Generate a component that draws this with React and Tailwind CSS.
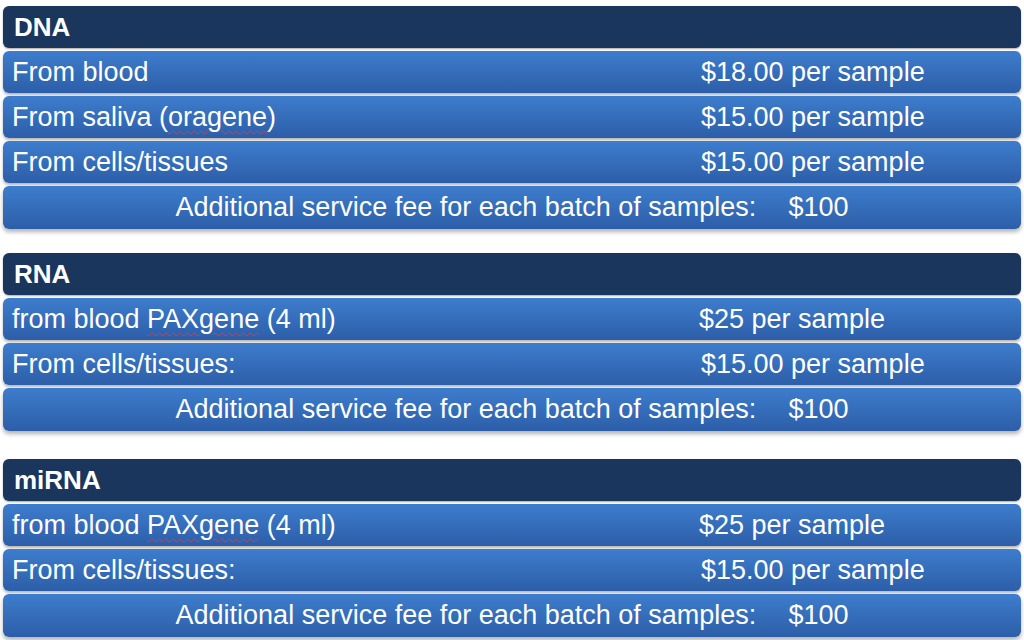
import React from "react";

const font = { fontFamily: '"Liberation Sans", Arial, sans-serif' };

function Header({ children }) {
  return (
    <div className="h-[42px] rounded-[6px] bg-[#1b365d] flex items-center pl-[11px] text-white font-bold text-[26px] shadow-[0_1px_2px_rgba(0,0,0,0.35)]">
      {children}
    </div>
  );
}

function Row({ label, price }) {
  return (
    <div className="h-[42px] rounded-[6px] bg-gradient-to-b from-[#3d7dcd] to-[#2d5ea8] flex items-center pl-[9px] text-white text-[27px] shadow-[0_2px_3px_rgba(0,0,0,0.3)]">
      <span className="w-[689px] shrink-0 whitespace-nowrap">{label}</span>
      <span className="whitespace-nowrap">{price}</span>
    </div>
  );
}

function FeeRow() {
  return (
    <div className="h-[43px] rounded-[6px] bg-gradient-to-b from-[#3d7dcd] to-[#2d5ea8] flex items-center justify-center gap-[32px] text-white text-[27px] shadow-[0_3px_4px_rgba(0,0,0,0.3)]">
      <span className="whitespace-nowrap">Additional service fee for each batch of samples:</span>
      <span className="whitespace-nowrap">$100</span>
    </div>
  );
}

const Sq = ({ children }) => (
  <span className="underline decoration-wavy decoration-[#e03a3a] decoration-1 underline-offset-[4px]">
    {children}
  </span>
);

export default function App() {
  return (
    <div className="w-[1024px] h-[640px] bg-white overflow-hidden px-[3px]" style={font}>
      <div className="pt-[6px] flex flex-col gap-[3px]">
        <Header>DNA</Header>
        <Row label="From blood" price="$18.00 per sample" />
        <Row label={<>From saliva (<Sq>oragene</Sq>)</>} price="$15.00 per sample" />
        <Row label="From cells/tissues" price="$15.00 per sample" />
        <FeeRow />
      </div>
      <div className="pt-[24px] flex flex-col gap-[3px]">
        <Header>RNA</Header>
        <Row label={<span>from blood <Sq>PAXgene</Sq> (4 ml)</span>} price={<span className="-ml-[2px]">$25 per sample</span>} />
        <Row label="From cells/tissues:" price="$15.00 per sample" />
        <FeeRow />
      </div>
      <div className="pt-[28px] flex flex-col gap-[3px]">
        <Header>miRNA</Header>
        <Row label={<span>from blood <Sq>PAXgene</Sq> (4 ml)</span>} price={<span className="-ml-[2px]">$25 per sample</span>} />
        <Row label="From cells/tissues:" price="$15.00 per sample" />
        <FeeRow />
      </div>
    </div>
  );
}
